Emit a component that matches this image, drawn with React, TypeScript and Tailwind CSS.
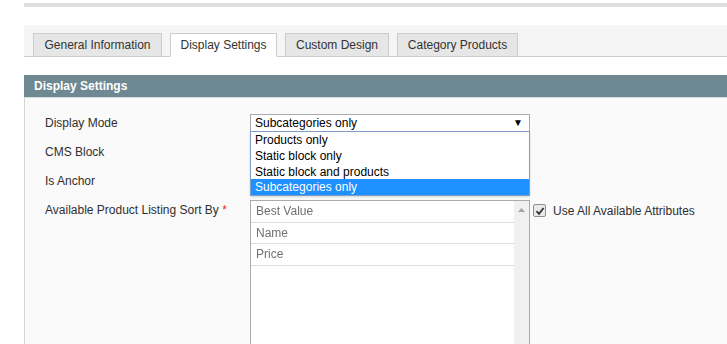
import React from "react";

const tabs = [
  { label: "General Information", w: "w-[129px]", active: false },
  { label: "Display Settings", w: "w-[107px]", active: true },
  { label: "Custom Design", w: "w-[104px]", active: false },
  { label: "Category Products", w: "w-[121px]", active: false },
];

export default function App() {
  return (
    <div className="w-[727px] h-[344px] overflow-hidden bg-white font-['Liberation_Sans',Arial,sans-serif] text-[12px] leading-none text-[#2f2f2f]">
      <div className="pl-[24px] pt-[3px]">
        <div className="h-[4px] bg-[#dedede]" />
        <div className="mt-[18px] h-[32px] bg-[#f5f5f5] border-b border-[#cccccc] pl-[9px] pt-[8px] flex gap-[8px]">
          {tabs.map((t) => (
            <div
              key={t.label}
              className={`${t.w} h-[24px] border border-[#cccccc] flex items-center justify-center text-[12px] text-[#333333] ${
                t.active ? "bg-white border-b-white" : "bg-[#e6e6e6]"
              }`}
            >
              {t.label}
            </div>
          ))}
        </div>
        <div className="h-[18px]" />
        <div className="h-[23px] bg-[#6f8992] border-b border-[#d6dde0] pl-[10px] flex items-center text-white font-bold text-[12px]">
          Display Settings
        </div>
        <div className="relative h-[300px] bg-[#fafafa] border-l border-[#d6d6d6] pl-[20px] pt-[16px] flex flex-col gap-[11px]">
          <div className="flex items-center h-[18px]">
            <div className="w-[205px]">Display Mode</div>
            <div className="relative w-[280px] h-[18px]">
              <div className="w-full h-full border border-[#aaaaaa] bg-white flex items-center justify-between pl-[4px] pr-[6px] text-black">
                <span>Subcategories only</span>
                <span className="text-[10px]">▼</span>
              </div>
              <div className="absolute left-0 top-[17px] z-10 w-[280px] border border-[#7f9dc9] bg-white text-black shadow-[0_1px_2px_rgba(0,0,0,0.15)]">
                <div className="h-[16px] pl-[4px] flex items-center">Products only</div>
                <div className="h-[16px] pl-[4px] flex items-center">Static block only</div>
                <div className="h-[15px] pl-[4px] flex items-center">Static block and products</div>
                <div className="h-[16px] pl-[4px] flex items-center bg-[#1e90ff] text-white">Subcategories only</div>
              </div>
            </div>
          </div>
          <div className="flex items-center h-[18px]">
            <div className="w-[205px]">CMS Block</div>
          </div>
          <div className="flex items-center h-[18px]">
            <div className="w-[205px]">Is Anchor</div>
          </div>
          <div className="flex items-start">
            <div className="w-[205px] pt-[3px]">
              Available Product Listing Sort By <span className="text-[#eb340a]">*</span>
            </div>
            <div className="w-[280px] h-[170px] border border-[#aaaaaa] bg-white flex mt-[-1px]">
              <div className="flex-1 flex flex-col">
                {["Best Value", "Name", "Price"].map((o) => (
                  <div
                    key={o}
                    className="h-[21.5px] border-b border-[#dddddd] pl-[5px] flex items-center"
                  >
                    <span className="text-[#707070] blur-[0.7px] text-[12px]">{o}</span>
                  </div>
                ))}
              </div>
              <div className="w-[15px] bg-[#f0f0f0] flex justify-center pt-[7px]">
                <svg width="7" height="4" viewBox="0 0 7 4">
                  <path d="M0 4 L3.5 0 L7 4 Z" fill="#a3a3a3" />
                </svg>
              </div>
            </div>
            <div className="ml-[3px] mt-[3px] w-[13px] h-[13px] rounded-[2px] border border-[#8f8f8f] bg-[#e9e9e9] flex items-center justify-center">
              <svg width="10" height="10" viewBox="0 0 10 10">
                <path d="M1.5 5.2 L4 7.8 L8.6 2" stroke="#333" strokeWidth="1.8" fill="none" />
              </svg>
            </div>
            <div className="ml-[7px] pt-[4px]">Use All Available Attributes</div>
          </div>
        </div>
      </div>
    </div>
  );
}
